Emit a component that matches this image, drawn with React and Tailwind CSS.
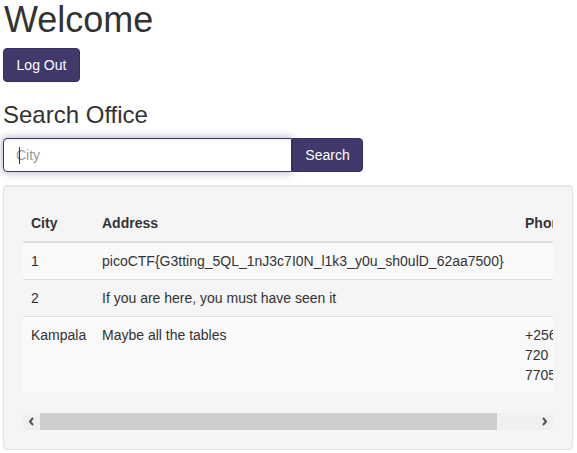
import React from 'react';

const rows = [
  { city: '1', address: 'picoCTF{G3tting_5QL_1nJ3c7I0N_l1k3_y0u_sh0ulD_62aa7500}', phone: '', striped: true },
  { city: '2', address: 'If you are here, you must have seen it', phone: '', striped: false },
  { city: 'Kampala', address: 'Maybe all the tables', phone: '+256 720 770500', striped: true },
];

const App = () => {
  return (
    <div className="min-h-screen bg-white px-[3px] text-[14px] leading-[20px] text-[#333]" style={{ fontFamily: '"Liberation Sans", Arial, sans-serif' }}>
      <h1 className="text-[36px] leading-[40px] font-normal mb-[8px] pl-px">Welcome</h1>
      <button className="h-[34px] w-[77px] bg-[#41386b] border border-[#352d5c] rounded-[4px] text-white text-[14px]">
        Log Out
      </button>

      <h3 className="text-[24px] leading-[26px] font-normal mt-[20px] mb-[10px]">Search Office</h3>
      <div className="flex w-[360px]">
        <div className="relative w-[289px]">
          <input
            type="text"
            placeholder="City"
            className="w-full h-[34px] px-[12px] border border-[#3c3366] rounded-l-[4px] bg-white text-[14px] outline-none placeholder:text-[#999] shadow-[inset_0_1px_1px_rgba(0,0,0,0.075),0_0_8px_rgba(65,56,107,0.45)]"
          />
          <span className="absolute left-[16px] top-[9px] h-[17px] w-px bg-[#333]" />
        </div>
        <button className="h-[34px] w-[71px] bg-[#41386b] border border-[#352d5c] rounded-r-[4px] text-white text-[14px]">
          Search
        </button>
      </div>

      <div className="mt-[13px] w-[570px] bg-[#f5f5f5] border border-[#e3e3e3] rounded-[4px] p-[19px] shadow-[inset_0_1px_1px_rgba(0,0,0,0.05)]">
        <div className="w-[530px] overflow-hidden">
          <table className="w-[574px] table-fixed border-collapse mb-[20px]">
            <colgroup>
              <col className="w-[71px]" />
              <col className="w-[423px]" />
              <col className="w-[80px]" />
            </colgroup>
            <thead>
              <tr>
                <th className="text-left font-bold p-[8px] border-b-2 border-[#ddd] align-bottom">City</th>
                <th className="text-left font-bold p-[8px] border-b-2 border-[#ddd] align-bottom">Address</th>
                <th className="text-left font-bold p-[8px] border-b-2 border-[#ddd] align-bottom">Phone</th>
              </tr>
            </thead>
            <tbody>
              {rows.map((r, i) => (
                <tr key={i} className={r.striped ? 'bg-[#f9f9f9]' : ''}>
                  <td className="p-[8px] border-t border-[#ddd] align-top">{r.city}</td>
                  <td className="p-[8px] border-t border-[#ddd] align-top whitespace-nowrap">{r.address}</td>
                  <td className="p-[8px] pr-[18px] border-t border-[#ddd] align-top">{r.phone}</td>
                </tr>
              ))}
            </tbody>
          </table>
        </div>
        {/* horizontal scrollbar */}
        <div className="flex w-[530px] h-[17px] bg-[#f0f0f0]">
          <div className="w-[17px] flex items-center justify-center">
            <svg width="7" height="9" viewBox="0 0 7 9">
              <path d="M5 1 L2 4.5 L5 8" fill="none" stroke="#505050" strokeWidth="2" />
            </svg>
          </div>
          <div className="w-[457px] bg-[#cdcdcd]" />
          <div className="flex-1" />
          <div className="w-[17px] flex items-center justify-center">
            <svg width="7" height="9" viewBox="0 0 7 9">
              <path d="M2 1 L5 4.5 L2 8" fill="none" stroke="#505050" strokeWidth="2" />
            </svg>
          </div>
        </div>
      </div>
    </div>
  );
};

export default App;
